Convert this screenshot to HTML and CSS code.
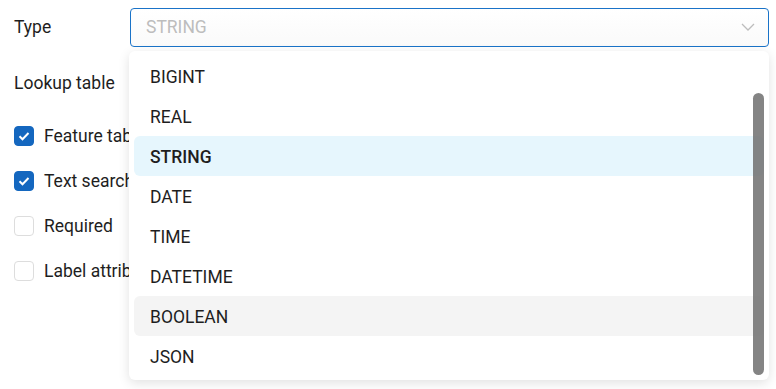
FILE: index.html
```html
<!DOCTYPE html>
<html lang="en">
<head>
  <meta charset="UTF-8">
  <meta name="viewport" content="width=device-width, initial-scale=1.0">
  <title>Field settings</title>
  <link rel="stylesheet" href="styles.css">
</head>
<body>
  <div class="form">
    <!-- Type -->
    <div class="row row-type">
      <div class="label">Type</div>
      <div class="select">
        <span class="placeholder">STRING</span>
        <svg class="chevron" width="14" height="9" viewBox="0 0 14 9"><path d="M1 1l6 6 6-6" fill="none" stroke="#bdbdbd" stroke-width="1.3"/></svg>
      </div>
    </div>

    <div class="row row-lookup">
      <div class="label">Lookup table</div>
    </div>

    <!-- Flags -->
    <label class="check-row"><span class="box checked"><svg width="14" height="14" viewBox="0 0 14 14"><path d="M2.5 7.2l3 3 6-6.2" fill="none" stroke="#fff" stroke-width="2"/></svg></span>Feature table</label>
    <label class="check-row"><span class="box checked"><svg width="14" height="14" viewBox="0 0 14 14"><path d="M2.5 7.2l3 3 6-6.2" fill="none" stroke="#fff" stroke-width="2"/></svg></span>Text search</label>
    <label class="check-row"><span class="box"></span>Required</label>
    <label class="check-row"><span class="box"></span>Label attribute</label>

    <!-- Dropdown -->
    <div class="dropdown">
      <div class="option">BIGINT</div>
      <div class="option">REAL</div>
      <div class="option selected">STRING</div>
      <div class="option">DATE</div>
      <div class="option">TIME</div>
      <div class="option">DATETIME</div>
      <div class="option hover">BOOLEAN</div>
      <div class="option">JSON</div>
      <div class="thumb"></div>
    </div>
  </div>
</body>
</html>
```

FILE: styles.css
```css
html, body {
  height: 100%;
}
body {
  margin: 0;
  font-family: Roboto, "Noto Sans", Arial, sans-serif;
  font-size: 17.5px;
  color: #1e1e1e;
  background: #fff;
}
.form {
  position: relative;
  min-height: 100%;
  padding: 7px 7px 0 14px;
  box-sizing: border-box;
}
.row {
  display: flex;
  align-items: center;
}
.row-type {
  height: 40px;
}
.row-lookup {
  height: 60px;
  padding-top: 6px;
}
.label {
  width: 116px;
}
.select {
  flex: 1;
  height: 39px;
  box-sizing: border-box;
  border: 1px solid #1a73c8;
  border-radius: 4px;
  display: flex;
  align-items: center;
  justify-content: space-between;
  padding: 0 13px 0 15px;
  background: linear-gradient(#fff, #fafafa);
}
.placeholder {
  color: #bdbdbd;
}
.check-row {
  display: flex;
  align-items: center;
  height: 45px;
  gap: 10px;
}
.box {
  width: 20px;
  height: 20px;
  box-sizing: border-box;
  border: 1px solid #ddd;
  border-radius: 4px;
  display: flex;
  align-items: center;
  justify-content: center;
}
.box.checked {
  background: #1467bf;
  border-color: #1467bf;
}
.dropdown {
  position: absolute;
  left: 129px;
  top: 51px;
  width: 640px;
  height: 329px;
  box-sizing: border-box;
  padding: 5px;
  background: #fff;
  border-radius: 6px;
  box-shadow: 0 3px 12px rgba(0, 0, 0, 0.12);
  overflow: hidden;
}
.option {
  height: 40px;
  line-height: 42px;
  padding-left: 16px;
  border-radius: 6px;
}
.option.selected {
  background: #e6f6fd;
  font-weight: 500;
}
.option.hover {
  background: #f4f4f4;
}
.thumb {
  position: absolute;
  right: 5px;
  top: 42px;
  width: 11px;
  height: 282px;
  border-radius: 6px;
  background: rgba(110, 110, 110, 0.85);
}
```
